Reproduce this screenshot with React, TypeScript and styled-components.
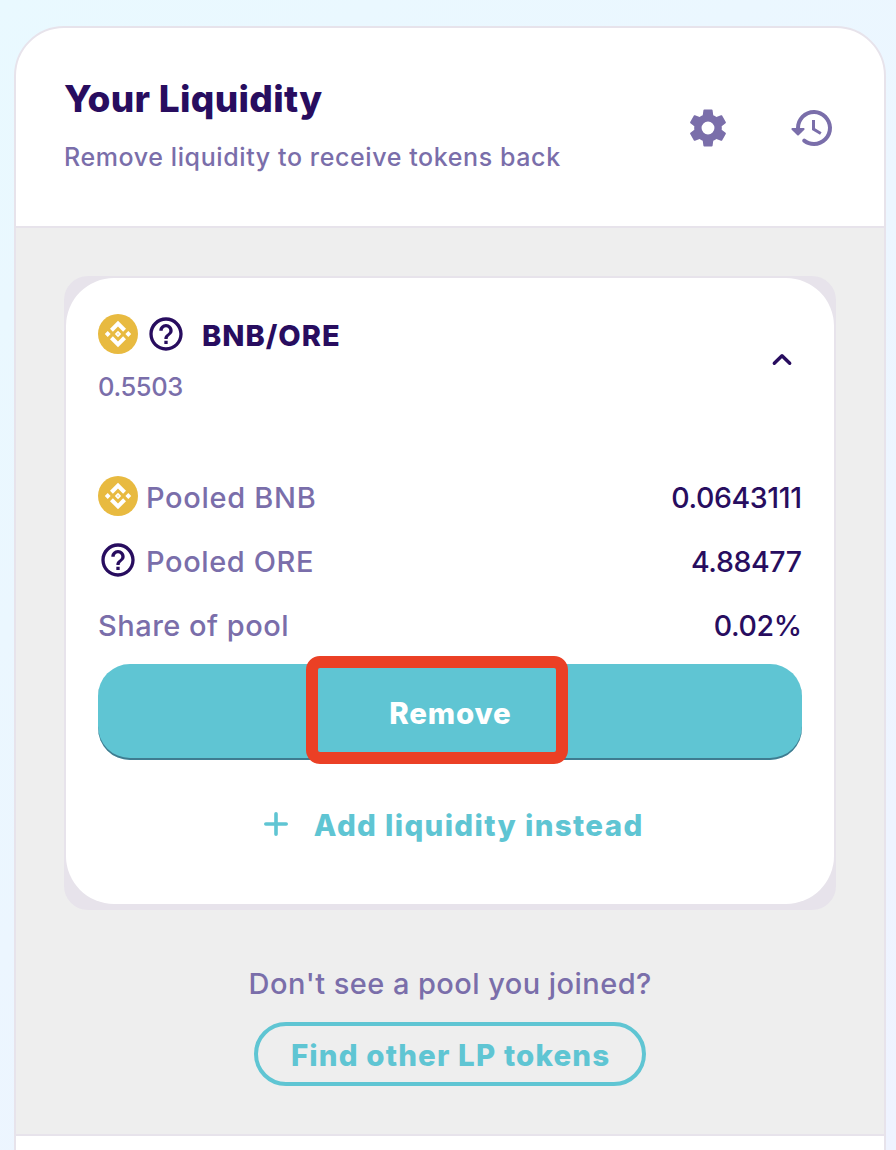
import React from "react";
import styled, { createGlobalStyle } from "styled-components";

const GlobalStyle = createGlobalStyle`
  * { box-sizing: border-box; }
  html, body { margin: 0; padding: 0; }
  body { font-family: "Inter", "Noto Sans", sans-serif; overflow: hidden; }
`;

const colors = {
  text: "#280d5f",
  subtle: "#7a6eaa",
  primary: "#5fc5d3",
  border: "#e7e3eb",
  panel: "#eeeeee",
  failure: "#eb4025",
};

const Page = styled.div`
  height: 1150px;
  padding: 26px 10px 0 14px;
  overflow: hidden;
  background: linear-gradient(139.73deg, #e9f9ff 0%, #eff3ff 100%);
`;

const Card = styled.main`
  height: 1200px;
  border: 2px solid ${colors.border};
  border-radius: 50px;
  background: #fff;
  overflow: hidden;
`;

const Header = styled.header`
  display: flex;
  justify-content: space-between;
  height: 200px;
  padding: 46px 48px 0;
  border-bottom: 2px solid ${colors.border};
`;

const Titles = styled.div`
  display: flex;
  flex-direction: column;
  gap: 12px;
`;

interface TextProps {
  $size: number;
  $line: number;
  $weight?: number;
  $color?: string;
  $spacing?: number;
}

const Text = styled.span<TextProps>`
  display: block;
  margin: 0;
  white-space: nowrap;
  font-size: ${(p) => p.$size}px;
  line-height: ${(p) => p.$line}px;
  font-weight: ${(p) => p.$weight ?? 400};
  color: ${(p) => p.$color ?? colors.text};
  letter-spacing: ${(p) => p.$spacing ?? 0}px;
  margin-right: ${(p) => -(p.$spacing ?? 0)}px;
`;

const HeaderActions = styled.div`
  display: flex;
  gap: 56px;
  padding-top: 30px;
  color: ${colors.subtle};
`;

const Icon = styled.svg<{ $size: number }>`
  display: block;
  flex: none;
  width: ${(p) => p.$size}px;
  height: ${(p) => p.$size}px;
  fill: currentColor;
`;

const Body = styled.section`
  display: flex;
  flex-direction: column;
  align-items: center;
  height: 908px;
  padding: 48px 48px 0;
  background: ${colors.panel};
  border-bottom: 2px solid ${colors.border};
`;

const PoolFrame = styled.div`
  width: 772px;
  padding: 2px 2px 6px;
  border-radius: 24px;
  background: ${colors.border};
`;

const PoolCard = styled.article`
  height: 626px;
  padding: 36px 32px 0;
  border-radius: 48px;
  background: #fff;
`;

const PoolHeader = styled.div`
  display: flex;
  justify-content: space-between;
  height: 162px;
`;

const PairName = styled.div`
  display: flex;
  align-items: center;
  gap: 8px;
  height: 40px;
  color: ${colors.text};
  & > :last-child { margin-left: 8px; padding-top: 3px; }
`;

const PairShare = styled.div`
  padding-top: 14px;
`;

const Chevron = styled.div`
  padding: 22px 0 0;
  color: ${colors.text};
`;

const Rows = styled.div`
  display: flex;
  flex-direction: column;
  gap: 24px;
`;

const Row = styled.div`
  display: flex;
  align-items: center;
  justify-content: space-between;
  height: 40px;
  color: ${colors.text};
  & span { padding-top: 4px; }
`;

const RowLabel = styled.div`
  display: flex;
  align-items: center;
  gap: 8px;
`;

const RemoveButton = styled.button`
  position: relative;
  display: flex;
  align-items: center;
  justify-content: center;
  width: 100%;
  height: 96px;
  margin-top: 20px;
  padding: 2px 0 0;
  border: 0;
  border-radius: 32px;
  background: ${colors.primary};
  box-shadow: inset 0 -2px 0 rgba(14, 14, 44, 0.4);
  font-family: inherit;
`;

const Highlight = styled.span`
  position: absolute;
  left: 208px;
  top: -8px;
  width: 262px;
  height: 108px;
  border: 12px solid ${colors.failure};
  border-radius: 14px;
`;

const AddLink = styled.div`
  display: flex;
  align-items: center;
  justify-content: center;
  gap: 14px;
  height: 96px;
  margin-top: 16px;
  padding-right: 6px;
  color: ${colors.primary};
  & span { padding-top: 2px; }
`;

const Prompt = styled.div`
  margin-top: 54px;
`;

const FindButton = styled.button`
  display: flex;
  align-items: center;
  justify-content: center;
  width: 392px;
  height: 64px;
  margin-top: 18px;
  padding: 2px 0 0;
  border: 4px solid ${colors.primary};
  border-radius: 32px;
  background: transparent;
  font-family: inherit;
`;

const CogIcon = () => (
  <Icon $size={48} viewBox="0 0 24 24">
    <path d="M19.5 12c0-.34-.03-.66-.07-.98l2.11-1.65a.5.5 0 0 0 .12-.64l-2-3.46c-.12-.22-.39-.3-.61-.22l-2.49 1c-.52-.4-1.08-.73-1.69-.98l-.38-2.65A.49.49 0 0 0 14 2h-4a.49.49 0 0 0-.49.42l-.38 2.65c-.61.25-1.17.59-1.69.98l-2.49-1c-.23-.09-.49 0-.61.22l-2 3.46c-.13.22-.07.49.12.64l2.11 1.65c-.04.32-.07.65-.07.98s.03.66.07.98l-2.11 1.65a.5.5 0 0 0-.12.64l2 3.46c.12.22.39.3.61.22l2.49-1c.52.4 1.08.73 1.69.98l.38 2.65c.03.24.24.42.49.42h4c.25 0 .46-.18.49-.42l.38-2.65c.61-.25 1.17-.59 1.69-.98l2.49 1c.23.09.49 0 .61-.22l2-3.46a.5.5 0 0 0-.12-.64l-2.11-1.65c.04-.32.07-.64.07-.98zM12 15.5a3.5 3.5 0 1 1 0-7 3.5 3.5 0 0 1 0 7z" transform="translate(12 12) scale(.92) translate(-12 -12)" />
  </Icon>
);

const HistoryIcon = () => (
  <Icon $size={48} viewBox="0 0 24 24">
    <path d="M13.26 3C8.17 2.86 4 6.95 4 12H2.21c-.45 0-.67.54-.35.85l2.79 2.8c.2.2.51.2.71 0l2.79-2.8c.31-.31.09-.85-.36-.85H6c0-3.9 3.18-7.05 7.1-7 3.72.05 6.85 3.18 6.9 6.9.05 3.91-3.1 7.1-7 7.1-1.61 0-3.1-.55-4.28-1.48a.994.994 0 0 0-1.32.08c-.42.42-.39 1.13.08 1.49A8.858 8.858 0 0 0 13 21c5.05 0 9.14-4.17 9-9.26-.13-4.69-4.05-8.61-8.74-8.74z" />
    <path d="M12 8v5l4.02 2.39.77-1.28-3.29-1.95V8z" />
  </Icon>
);

const HelpIcon = () => (
  <Icon $size={40} viewBox="0 0 24 24">
    <path d="M11 18h2v-2h-2v2zm1-16C6.48 2 2 6.48 2 12s4.48 10 10 10 10-4.48 10-10S17.52 2 12 2zm0 18c-4.41 0-8-3.59-8-8s3.59-8 8-8 8 3.59 8 8-3.59 8-8 8zm0-14c-2.21 0-4 1.79-4 4h2c0-1.1.9-2 2-2s2 .9 2 2c0 2-3 1.75-3 5h2c0-2.25 3-2.5 3-5 0-2.21-1.79-4-4-4z" />
  </Icon>
);

const BnbIcon = () => (
  <Icon $size={40} viewBox="0 0 40 40">
    <circle cx="20" cy="20" r="20" fill="#e8ba40" />
    <path
      fill="#fff"
      fillRule="evenodd"
      d="M20 6.8l8 8-2.9 2.9-5.1-5.1-5.1 5.1-2.9-2.9zM20 33.2l8-8-2.9-2.9-5.1 5.1-5.1-5.1-2.9 2.9zM6.8 20l2.9-2.9 2.9 2.9-2.9 2.9zM27.4 20l2.9-2.9 2.9 2.9-2.9 2.9zM20 16.8l3.2 3.2-3.2 3.2-3.2-3.2zM20 19.2l-.8.8.8.8.8-.8z"
    />
  </Icon>
);

const ChevronUpIcon = () => (
  <Icon $size={40} viewBox="0 0 40 40">
    <path d="M12.3 23.7L20 16.1l7.7 7.6" transform="translate(0 3.6)" fill="none" stroke="currentColor" strokeWidth="3.4" strokeLinecap="round" strokeLinejoin="round" />
  </Icon>
);

const PlusIcon = () => (
  <Icon $size={48} viewBox="0 0 48 48">
    <path d="M24 13.8v20.4M13.8 24h20.4" fill="none" stroke="currentColor" strokeWidth="3.6" strokeLinecap="round" />
  </Icon>
);

interface PoolRowProps {
  icon?: React.ReactNode;
  label: string;
  value: string;
  labelSpacing: number;
  valueSpacing: number;
}

const PoolRow = ({ icon, label, value, labelSpacing, valueSpacing }: PoolRowProps) => (
  <Row>
    <RowLabel>
      {icon}
      <Text $size={29} $line={40} $weight={450} $color={colors.subtle} $spacing={labelSpacing}>{label}</Text>
    </RowLabel>
    <Text $size={28.5} $line={40} $weight={500} $spacing={valueSpacing}>{value}</Text>
  </Row>
);

export default function App() {
  return (
    <>
      <GlobalStyle />
      <Page>
        <Card>
          <Header>
            <Titles>
              <Text as="h1" $size={37} $line={50} $weight={800} $spacing={0.3}>Your Liquidity</Text>
              <Text $size={25} $line={42} $weight={450} $color={colors.subtle} $spacing={0.6}>Remove liquidity to receive tokens back</Text>
            </Titles>
            <HeaderActions>
              <CogIcon />
              <HistoryIcon />
            </HeaderActions>
          </Header>
          <Body>
            <PoolFrame>
              <PoolCard>
                <PoolHeader>
                  <div>
                    <PairName>
                      <BnbIcon />
                      <HelpIcon />
                      <Text $size={29} $line={40} $weight={800} $spacing={1}>BNB/ORE</Text>
                    </PairName>
                    <PairShare>
                      <Text $size={25.5} $line={38} $weight={450} $color={colors.subtle} $spacing={-0.4}>0.5503</Text>
                    </PairShare>
                  </div>
                  <Chevron>
                    <ChevronUpIcon />
                  </Chevron>
                </PoolHeader>
                <Rows>
                  <PoolRow icon={<BnbIcon />} label="Pooled BNB" value="0.0643111" labelSpacing={0.7} valueSpacing={-0.4} />
                  <PoolRow icon={<HelpIcon />} label="Pooled ORE" value="4.88477" labelSpacing={0.6} valueSpacing={-0.4} />
                  <PoolRow label="Share of pool" value="0.02%" labelSpacing={0.5} valueSpacing={-0.4} />
                </Rows>
                <RemoveButton>
                  <Text $size={29.5} $line={40} $weight={800} $color="#fff" $spacing={0.8}>Remove</Text>
                  <Highlight />
                </RemoveButton>
                <AddLink>
                  <PlusIcon />
                  <Text $size={29.5} $line={40} $weight={800} $color={colors.primary} $spacing={1.35}>Add liquidity instead</Text>
                </AddLink>
              </PoolCard>
            </PoolFrame>
            <Prompt>
              <Text $size={29} $line={40} $weight={450} $color={colors.subtle} $spacing={0.45}>Don't see a pool you joined?</Text>
            </Prompt>
            <FindButton>
              <Text $size={29.5} $line={40} $weight={800} $color={colors.primary} $spacing={1.15}>Find other LP tokens</Text>
            </FindButton>
          </Body>
        </Card>
      </Page>
    </>
  );
}
